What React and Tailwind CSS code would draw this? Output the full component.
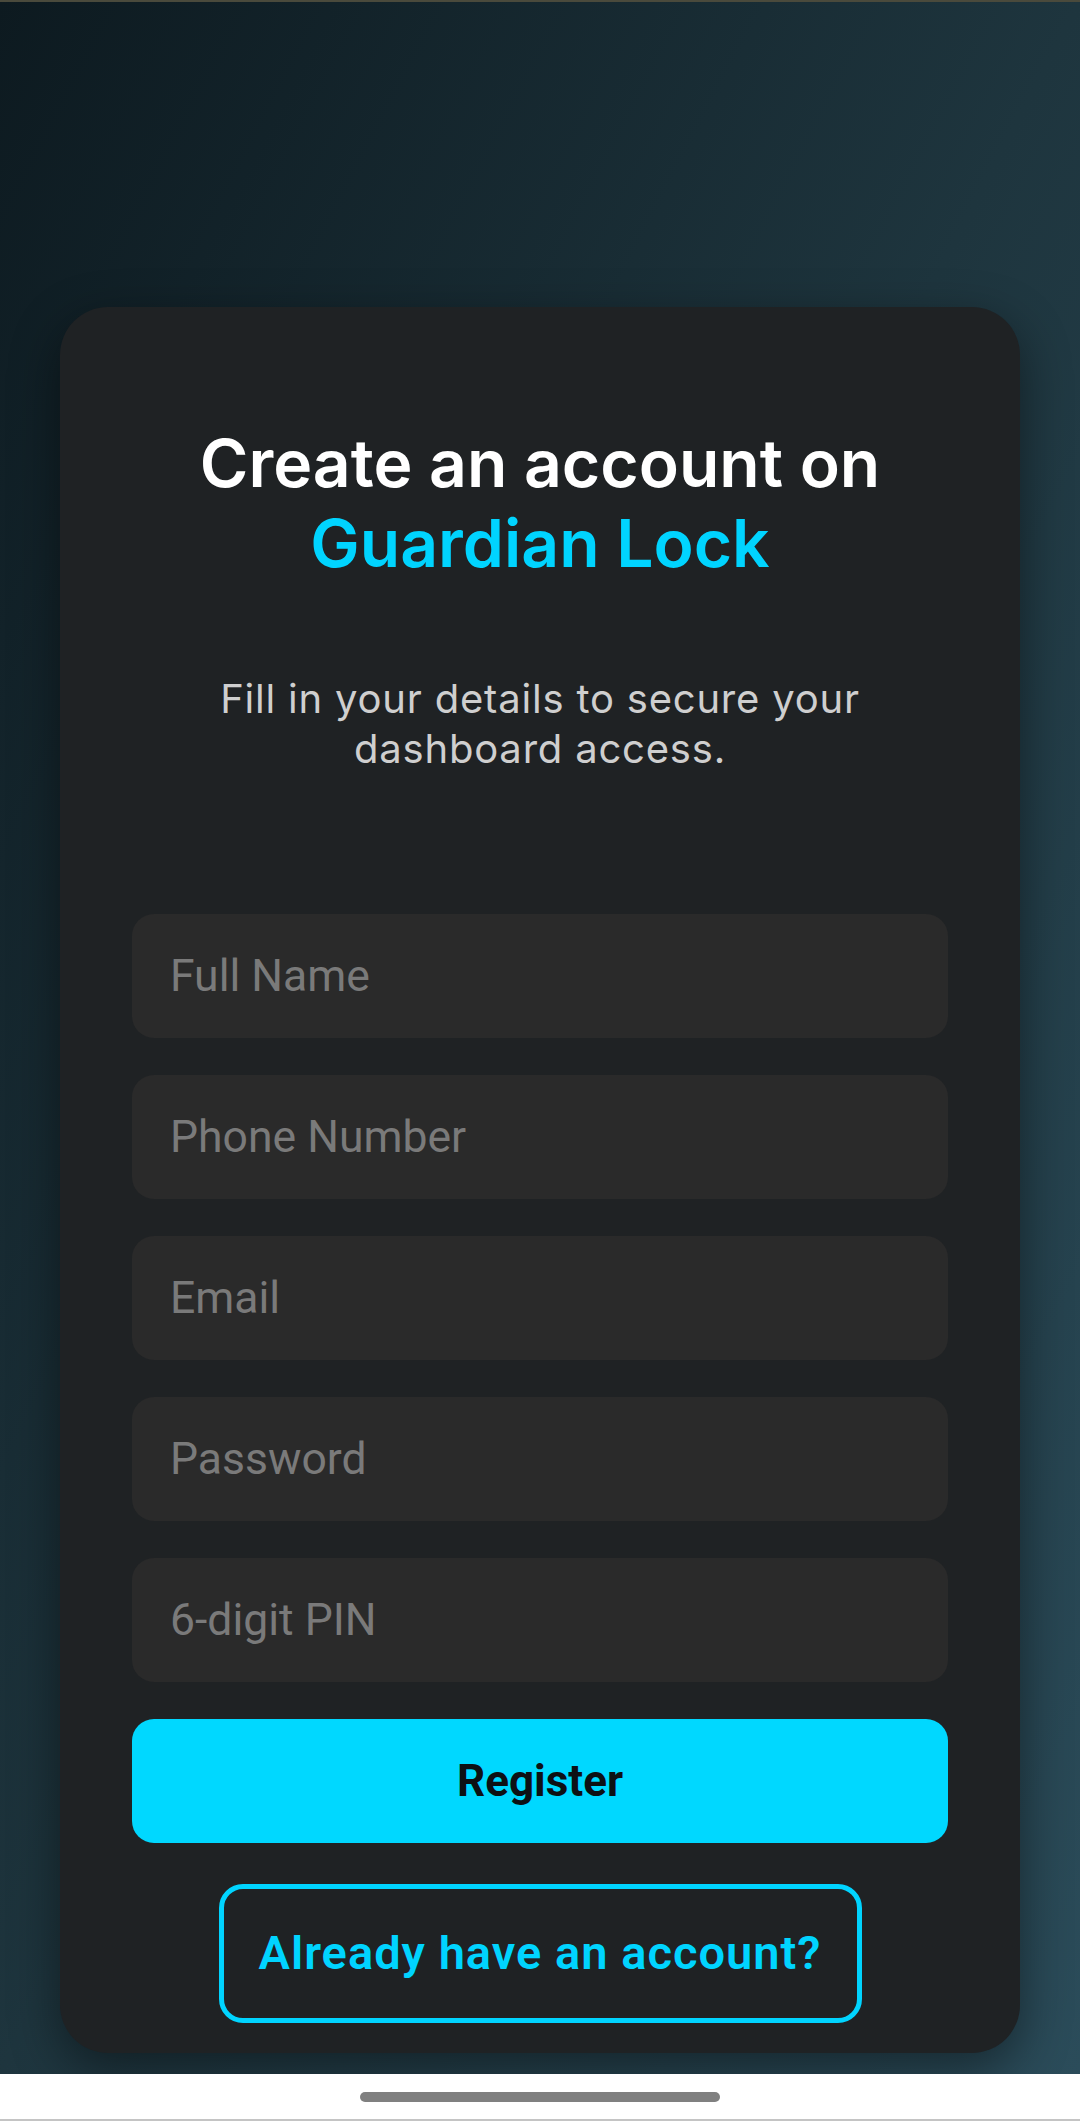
import React from "react";

const fields = ["Full Name", "Phone Number", "Email", "Password", "6-digit PIN"];

export default function App() {
  return (
    <div className="h-[2121px] w-[1080px] flex flex-col bg-white overflow-hidden">
      {/* status bar strip */}
      <div className="h-[2px] bg-[#4a4a3c]" />

      {/* page body */}
      <div className="flex-1 bg-gradient-to-br from-[#0d1a20] via-[#1e353e] to-[#2b4c5a] pt-[305px]">
        <div className="mx-[60px] rounded-[48px] bg-[#1f2224] shadow-[0_16px_50px_rgba(0,0,0,0.45)] pt-[116px] px-[72px] pb-[30px]">
          {/* heading */}
          <h1 className="text-center text-[66px] leading-[80px] font-semibold text-white font-['Inter',sans-serif]">
            <span className="block">Create an account on</span>
            <span className="block text-[#00d4ff]">Guardian Lock</span>
          </h1>

          <p className="mt-[91px] text-center text-[40px] leading-[50px] tracking-[0.8px] text-[#cfcfcf] font-['Inter',sans-serif] px-[30px]">
            Fill in your details to secure your dashboard access.
          </p>

          {/* form */}
          <div className="mt-[140px] flex flex-col gap-[37px]">
            {fields.map((f) => (
              <div
                key={f}
                className="h-[124px] rounded-[22px] bg-[#2a2a2a] flex items-center px-[38px]"
              >
                <span className="text-[44.5px] text-[#7a7a7a] font-['Roboto',sans-serif]">{f}</span>
              </div>
            ))}
          </div>

          <button className="mt-[37px] w-full h-[124px] rounded-[22px] bg-[#00d8ff] flex items-center justify-center">
            <span className="text-[44px] font-bold text-[#0d1114] font-['Roboto',sans-serif]">Register</span>
          </button>

          <div className="mt-[41px] flex justify-center">
            <button className="w-[643px] h-[139px] rounded-[24px] border-[5px] border-[#00d4ff] flex items-center justify-center">
              <span className="text-[47px] font-semibold tracking-[1px] text-[#00d4ff] font-['Roboto',sans-serif]">
                Already have an account?
              </span>
            </button>
          </div>
        </div>
        <div className="h-[21px]" />
      </div>

      {/* nav bar */}
      <div className="h-[47px] bg-white flex flex-col items-center">
        <div className="mt-[18px] w-[360px] h-[10px] rounded-full bg-[#808080]" />
        <div className="flex-1" />
        <div className="w-full h-[2px] bg-[#c4c4c4]" />
      </div>
    </div>
  );
}
